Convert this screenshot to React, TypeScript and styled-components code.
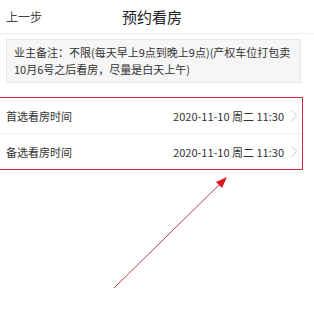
import React from 'react';
import styled, { createGlobalStyle } from 'styled-components';

const GlobalStyle = createGlobalStyle`
  body {
    margin: 0;
    background: #fff;
    font-family: "Noto Sans CJK SC", "Noto Sans", sans-serif;
    color: #333;
  }
`;

const Page = styled.div`
  position: relative;
  width: 314px;
  height: 331px;
  overflow: hidden;
  background: #fff;
`;

const Header = styled.div`
  display: grid;
  grid-template-columns: 60px 1fr 60px;
  align-items: center;
  height: 33px;
  border-bottom: 1px solid #eeeeee;
  padding: 0 6px;
`;

const Back = styled.span`
  font-size: 12px;
  color: #444;
`;

const Title = styled.span`
  justify-self: center;
  font-size: 15px;
  color: #222;
  margin-right: 10px;
`;

const Note = styled.div`
  margin: 5px 13px 0 6px;
  padding: 4px 7px;
  background: #f6f6f6;
  border: 1px solid #e8e8e8;
  font-size: 11px;
  line-height: 17px;
  white-space: nowrap;
  color: #333;
`;

const Frame = styled.div`
  margin: 14px 11px 0 0;
  border: 1px solid #c9302f;
  border-left: none;
`;

const Row = styled.div<{ last?: boolean }>`
  display: flex;
  align-items: center;
  justify-content: space-between;
  height: 35px;
  padding: 0 4px 0 6px;
  font-size: 11px;
  color: #333;
  border-bottom: ${p => (p.last ? 'none' : '1px solid #eeeeee')};
`;

const Value = styled.span`
  display: flex;
  align-items: center;
  gap: 6px;
  color: #333;
`;

const Arrow = styled.svg`
  position: absolute;
  left: 0;
  top: 0;
  pointer-events: none;
`;

const Chevron = () => (
  <svg width="8" height="13" viewBox="0 0 8 13">
    <path d="M1.5 1 L6.5 6.5 L1.5 12" fill="none" stroke="#c8c8c8" strokeWidth="1" />
  </svg>
);

export default function App() {
  return (
    <Page>
      <GlobalStyle />
      <Header>
        <Back>上一步</Back>
        <Title>预约看房</Title>
        <span />
      </Header>
      <Note>
        业主备注：不限(每天早上9点到晚上9点)(产权车位打包卖
        <br />
        10月6号之后看房，尽量是白天上午)
      </Note>
      <Frame>
        <Row>
          <span>首选看房时间</span>
          <Value>2020-11-10 周二 11:30 <Chevron /></Value>
        </Row>
        <Row last>
          <span>备选看房时间</span>
          <Value>2020-11-10 周二 11:30 <Chevron /></Value>
        </Row>
      </Frame>
      <Arrow width="314" height="331" viewBox="0 0 314 331">
        <line x1="114" y1="288" x2="222" y2="182" stroke="#b8404a" strokeWidth="1" />
        <polygon points="227,177 216,182 222,188" fill="#e0141e" />
      </Arrow>
    </Page>
  );
}
